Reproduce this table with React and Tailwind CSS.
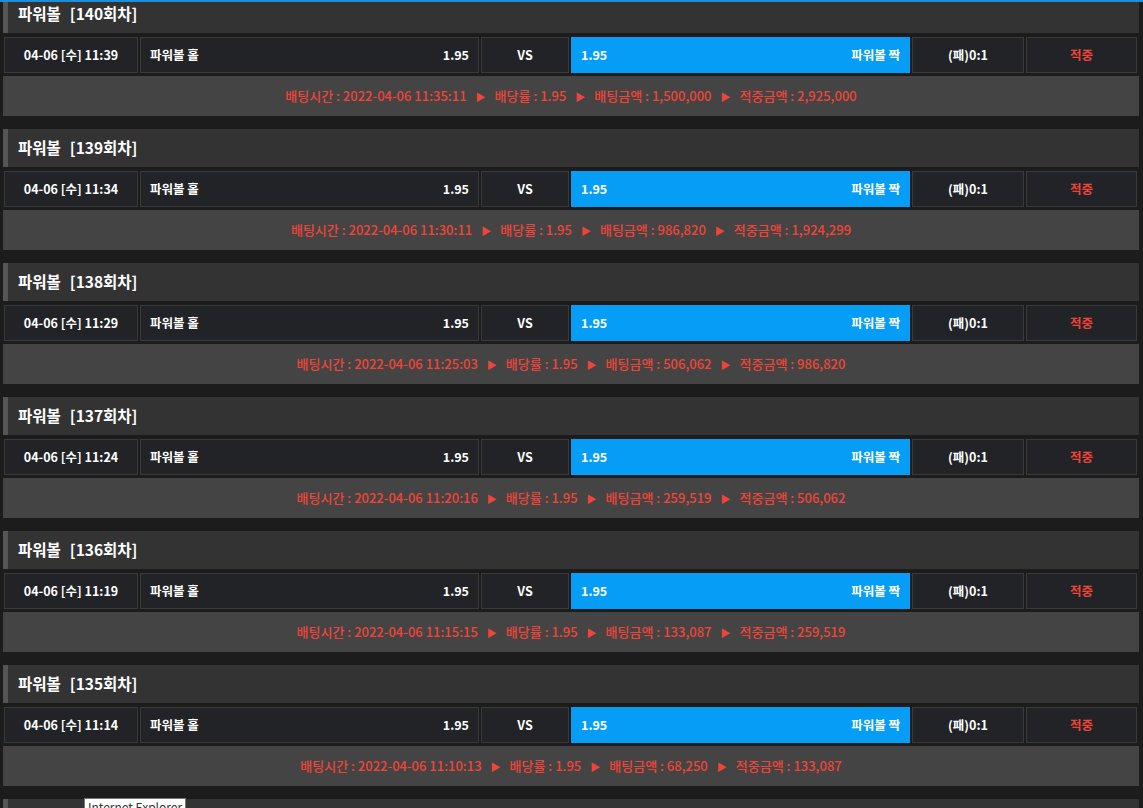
import React from 'react';

const rounds = [
  { no: 140, time: '11:39', bet: '11:35:11', amount: '1,500,000', win: '2,925,000' },
  { no: 139, time: '11:34', bet: '11:30:11', amount: '986,820', win: '1,924,299' },
  { no: 138, time: '11:29', bet: '11:25:03', amount: '506,062', win: '986,820' },
  { no: 137, time: '11:24', bet: '11:20:16', amount: '259,519', win: '506,062' },
  { no: 136, time: '11:19', bet: '11:15:15', amount: '133,087', win: '259,519' },
  { no: 135, time: '11:14', bet: '11:10:13', amount: '68,250', win: '133,087' },
];

const font = { fontFamily: '"Noto Sans CJK KR", "Noto Sans", sans-serif' };

const Arrow = () => <span className="mx-[9px] text-[10px]">▶</span>;

const Header = ({ children }) => (
  <div className="h-[38px] flex items-center bg-[#333333] border-l-[5px] border-[#555555] pl-[10px]">
    {children}
  </div>
);

const Round = ({ r }) => (
  <div className="mb-[13px]">
    {/* header */}
    <Header>
      <span className="text-white text-[15.5px] font-bold">파워볼</span>
      <span className="ml-[9px] text-white text-[15.5px] font-bold">[{r.no}회차]</span>
    </Header>

    {/* bet row */}
    <div className="mt-[4px] px-[1px] flex gap-[2px] h-[36px] text-[12.5px] font-semibold text-white">
      <div className="w-[134px] shrink-0 flex items-center justify-center bg-[#222326] border border-[#3a3a3a]">
        04-06 [수] {r.time}
      </div>
      <div className="w-[339px] shrink-0 flex items-center justify-between px-[9px] bg-[#222326] border border-[#3a3a3a]">
        <span>파워볼 홀</span>
        <span>1.95</span>
      </div>
      <div className="w-[88px] shrink-0 flex items-center justify-center bg-[#222326] border border-[#3a3a3a]">
        VS
      </div>
      <div className="w-[339px] shrink-0 flex items-center justify-between px-[10px] bg-[#059df6]">
        <span>1.95</span>
        <span>파워볼 짝</span>
      </div>
      <div className="w-[112px] shrink-0 flex items-center justify-center bg-[#222326] border border-[#3a3a3a]">
        (패)0:1
      </div>
      <div className="w-[111px] shrink-0 flex items-center justify-center bg-[#222326] border border-[#3a3a3a] text-[#f04438]">
        적중
      </div>
    </div>

    {/* result */}
    <div className="mt-[3px] h-[40px] flex items-center justify-center bg-[#444444] text-[#f04438] text-[13px] font-medium">
      <span>배팅시간 : 2022-04-06 {r.bet}</span>
      <Arrow />
      <span>배당률 : 1.95</span>
      <Arrow />
      <span>배팅금액 : {r.amount}</span>
      <Arrow />
      <span>적중금액 : {r.win}</span>
    </div>
  </div>
);

const App = () => {
  return (
    <div style={font} className="relative w-full h-screen overflow-hidden bg-[#1c1c1c] border-t-2 border-[#1a8fdc]">
      <div className="mt-[-7px] pl-[3px] pr-[4px]">
        {rounds.map((r) => (
          <Round key={r.no} r={r} />
        ))}
        {/* next round header, only its top edge is in view */}
        <Header />
      </div>

      <div className="absolute left-[84px] top-[796px] bg-white border border-[#767676] px-[3px] text-[12px] leading-[16px] text-[#333]">
        Internet Explorer
      </div>
    </div>
  );
};

export default App;
